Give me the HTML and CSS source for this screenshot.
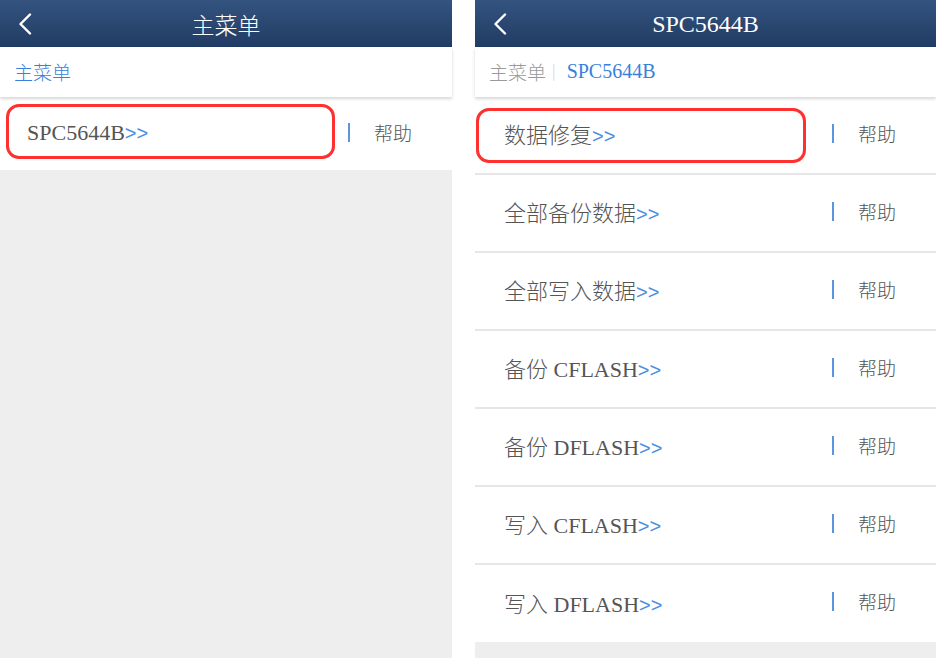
FILE: index.html
```html
<!DOCTYPE html>
<html lang="zh-CN">
<head>
  <meta charset="UTF-8" />
  <meta name="viewport" content="width=device-width, initial-scale=1.0"/>
  <title>SPC5644B</title>
  <link rel="stylesheet" href="styles.css">
</head>
<body>
  <div class="screens">
    <!-- left screen: main menu -->
    <section class="phone phone-left">
      <header class="topbar">
        <svg class="back" width="14" height="22" viewBox="0 0 14 22">
          <polyline points="12,1.5 2.5,11 12,20.5" fill="none" stroke="#fff" stroke-width="2.4" stroke-linecap="round" stroke-linejoin="round"/>
        </svg>
        <h1 class="title cjk">主菜单</h1>
      </header>
      <nav class="crumbs">
        <span class="crumb active">主菜单</span>
      </nav>
      <ul class="menu">
        <li class="item item-short">
          <span class="label">SPC5644B<span class="more">&gt;&gt;</span></span>
          <span class="help"><i class="bar"></i>帮助</span>
          <div class="mark mark-left"></div>
        </li>
      </ul>
    </section>

    <!-- right screen: SPC5644B functions -->
    <section class="phone phone-right">
      <header class="topbar">
        <svg class="back" width="14" height="22" viewBox="0 0 14 22">
          <polyline points="12,1.5 2.5,11 12,20.5" fill="none" stroke="#fff" stroke-width="2.4" stroke-linecap="round" stroke-linejoin="round"/>
        </svg>
        <h1 class="title latin">SPC5644B</h1>
      </header>
      <nav class="crumbs">
        <span class="crumb">主菜单</span>
        <span class="crumb-sep">|</span>
        <span class="crumb active latin">SPC5644B</span>
      </nav>
      <ul class="menu">
        <li class="item">
          <span class="label">数据修复<span class="more">&gt;&gt;</span></span>
          <span class="help"><i class="bar"></i>帮助</span>
          <div class="mark mark-right"></div>
        </li>
        <li class="item">
          <span class="label">全部备份数据<span class="more">&gt;&gt;</span></span>
          <span class="help"><i class="bar"></i>帮助</span>
        </li>
        <li class="item">
          <span class="label">全部写入数据<span class="more">&gt;&gt;</span></span>
          <span class="help"><i class="bar"></i>帮助</span>
        </li>
        <li class="item">
          <span class="label">备份 CFLASH<span class="more">&gt;&gt;</span></span>
          <span class="help"><i class="bar"></i>帮助</span>
        </li>
        <li class="item">
          <span class="label">备份 DFLASH<span class="more">&gt;&gt;</span></span>
          <span class="help"><i class="bar"></i>帮助</span>
        </li>
        <li class="item">
          <span class="label">写入 CFLASH<span class="more">&gt;&gt;</span></span>
          <span class="help"><i class="bar"></i>帮助</span>
        </li>
        <li class="item last">
          <span class="label">写入 DFLASH<span class="more">&gt;&gt;</span></span>
          <span class="help"><i class="bar"></i>帮助</span>
        </li>
      </ul>
    </section>
  </div>
</body>
</html>
```

FILE: styles.css
```css
html, body {
  margin: 0;
  padding: 0;
  height: 100%;
  background: #fff;
  font-family: "Liberation Serif", "Noto Sans CJK SC", serif;
  font-weight: 300;
  color: #555;
}

.screens {
  display: flex;
  gap: 23px;
  height: 658px;
}

.phone {
  display: flex;
  flex-direction: column;
  background: #eeeeee;
  height: 100%;
}

.phone-left {
  width: 452px;
}

.phone-right {
  flex: 1;
}

.topbar {
  position: relative;
  height: 47px;
  display: flex;
  align-items: center;
  justify-content: center;
  background: linear-gradient(#34537f, #213c64);
  color: #fff;
}

.back {
  position: absolute;
  left: 18px;
  top: 13px;
}

.title {
  margin: 0;
  font-weight: 300;
}

.title.cjk {
  font-size: 23px;
}

.title.latin {
  font-size: 24px;
  padding-top: 1px;
}

.crumbs {
  height: 50px;
  box-sizing: border-box;
  display: flex;
  align-items: center;
  padding: 0 0 2px 14px;
  background: #fff;
  font-size: 19px;
  color: #9a9a9a;
  box-shadow: 0 2px 3px rgba(0, 0, 0, 0.16);
  position: relative;
  z-index: 1;
}

.crumb.active {
  color: #3a7fdc;
}

.crumb.latin {
  font-size: 20px;
}

.crumb-sep {
  color: #dcdcdc;
  margin: 0 11px 0 6px;
  font-size: 18px;
}

.menu {
  list-style: none;
  margin: 0;
  padding: 0;
  background: #fff;
}

.item {
  position: relative;
  height: 76px;
  box-sizing: content-box;
  display: flex;
  align-items: center;
  justify-content: space-between;
  padding-left: 29px;
  border-bottom: 2px solid #e6e6e6;
}

.item .label,
.item .help {
  margin-bottom: 4px;
}

.item.last {
  height: 77px;
  border-bottom: none;
}

.item-short {
  height: 73px;
  padding-left: 27px;
  border-bottom: none;
}

.item-short .label,
.item-short .help {
  margin-bottom: 2px;
}

.label {
  font-size: 22px;
  color: #555;
}

.more {
  color: #4a8fe4;
  font-family: "Liberation Sans", sans-serif;
  font-size: 20px;
}

.help {
  display: flex;
  align-items: center;
  padding-right: 40px;
  font-family: "Noto Sans CJK SC", sans-serif;
  font-size: 19px;
  color: #555;
}

.bar {
  display: inline-block;
  width: 2px;
  height: 19px;
  background: #5b95dd;
  margin-right: 24px;
  margin-left: -2px;
}

/* red annotation outlines drawn over the first row */
.mark {
  position: absolute;
  border: 3px solid #ff3030;
  border-radius: 13px;
  box-sizing: border-box;
}

.mark-left {
  left: 6px;
  top: 7px;
  width: 329px;
  height: 55px;
}

.mark-right {
  left: 1px;
  top: 11px;
  width: 330px;
  height: 55px;
}
```
